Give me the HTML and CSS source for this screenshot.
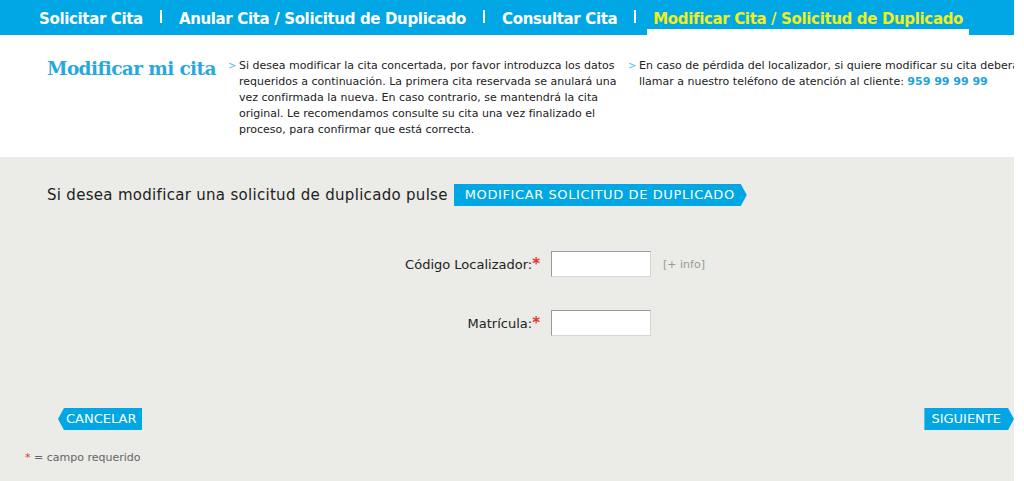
FILE: index.html
```html
<!DOCTYPE html>
<html lang="es">
<head>
<meta charset="UTF-8">
<meta name="viewport" content="width=device-width, initial-scale=1.0">
<title>Modificar Cita</title>
<link rel="stylesheet" href="styles.css">
</head>
<body>
<div class="page">
<nav class="tabs">
<a class="tab" href="#">Solicitar Cita</a>
<span class="sep"></span>
<a class="tab" href="#">Anular Cita / Solicitud de Duplicado</a>
<span class="sep"></span>
<a class="tab" href="#">Consultar Cita</a>
<span class="sep"></span>
<a class="tab active" href="#">Modificar Cita / Solicitud de Duplicado</a>
</nav>

<section class="intro">
<h1>Modificar mi cita</h1>
<p class="info info-main">Si desea modificar la cita concertada, por favor introduzca los datos requeridos a continuación. La primera cita reservada se anulará una vez confirmada la nueva. En caso contrario, se mantendrá la cita original. Le recomendamos consulte su cita una vez finalizado el proceso, para confirmar que está correcta.</p>
<p class="info info-side">En caso de pérdida del localizador, si quiere modificar su cita deberá llamar a nuestro teléfono de atención al cliente: <strong class="phone">959 99 99 99</strong></p>
</section>

<main class="form-area">
<div class="duplicate">
<span>Si desea modificar una solicitud de duplicado pulse</span>
<a class="btn btn-next" href="#">MODIFICAR SOLICITUD DE DUPLICADO</a>
</div>

<form class="fields">
<div class="field">
<label for="localizador">Código Localizador:<span class="req">*</span></label>
<input type="text" id="localizador">
<span class="more">[+ info]</span>
</div>
<div class="field">
<label for="matricula">Matrícula:<span class="req">*</span></label>
<input type="text" id="matricula">
</div>
</form>

<div class="actions">
<a class="btn btn-back" href="#">CANCELAR</a>
<a class="btn btn-next" href="#">SIGUIENTE</a>
</div>

<p class="note"><span class="req">*</span> = campo requerido</p>
</main>
</div>
</body>
</html>
```

FILE: styles.css
```css
body {
margin: 0;
padding: 0;
font-family: "DejaVu Sans", Verdana, sans-serif;
color: #222;
background-color: #fff;
}
.page {
width: 1014px;
height: 481px;
overflow: hidden;
display: flex;
flex-direction: column;
}

/* top navigation */
.tabs {
display: flex;
height: 35px;
padding-left: 39px;
background-color: #00a7e4;
flex-shrink: 0;
}
.tab {
padding: 10px 0 0;
font-size: 15px;
font-weight: bold;
letter-spacing: -0.35px;
color: #fff;
text-decoration: none;
white-space: nowrap;
}
.tab.active {
padding: 10px 6px 0;
color: #f2ee1c;
box-shadow: inset 0 -6px 0 #fff;
}
.sep {
width: 2px;
height: 13px;
margin: 10px 17px 0 17px;
background-color: #fff;
flex-shrink: 0;
}
.sep:last-of-type {
margin-right: 11px;
}

/* intro texts */
.intro {
display: flex;
height: 122px;
padding: 23px 0 0 47px;
box-sizing: border-box;
flex-shrink: 0;
}
.intro h1 {
width: 181px;
margin: 0;
font-family: "DejaVu Serif", Georgia, serif;
font-size: 18.5px;
font-weight: bold;
letter-spacing: -0.6px;
color: #29a8dc;
flex-shrink: 0;
}
.info {
position: relative;
margin: 0;
padding-left: 11px;
font-size: 11px;
line-height: 16px;
color: #222;
flex-shrink: 0;
}
.info::before {
content: ">";
position: absolute;
left: 0;
top: 0;
font-size: 10px;
color: #5bbbe6;
}
.info-main {
width: 386px;
}
.info-side {
width: 392px;
margin-left: 3px;
}
.phone {
color: #1ea3dc;
}

/* form zone */
.form-area {
flex: 1;
background-color: #ebebe7;
padding: 27px 0 0;
}
.duplicate {
display: flex;
align-items: center;
padding-left: 47px;
font-size: 15px;
letter-spacing: 0.3px;
}
.duplicate .btn {
margin-left: 6px;
letter-spacing: 0.6px;
}
.btn {
display: inline-block;
height: 22px;
line-height: 22px;
font-size: 13px;
color: #fff;
text-decoration: none;
background-color: #00a7e4;
}
.btn-next {
padding: 0 12px 0 11px;
clip-path: polygon(0 0, calc(100% - 6px) 0, 100% 50%, calc(100% - 6px) 100%, 0 100%);
}
.btn-back {
padding: 0 6px 0 8px;
clip-path: polygon(6px 0, 100% 0, 100% 100%, 6px 100%, 0 50%);
}

.fields {
margin: 45px 0 0;
}
.field {
display: flex;
align-items: center;
height: 26px;
margin-bottom: 33px;
}
.field label {
width: 540px;
text-align: right;
font-size: 13px;
}
.req {
color: #e8322c;
}
.field .req {
font-size: 15px;
font-weight: bold;
}
.field input {
width: 100px;
height: 26px;
margin: 0 0 0 11px;
padding: 0;
box-sizing: border-box;
border: 1px solid #d6d6d6;
border-top-color: #999;
border-left-color: #999;
background-color: #fff;
}
.more {
margin-left: 12px;
font-size: 11px;
color: #999;
}

.actions {
display: flex;
justify-content: space-between;
padding-left: 58px;
margin-top: 72px;
}
.actions .btn-next {
padding: 0 13px 0 7px;
}
.note {
margin: 21px 0 0 25px;
font-size: 11px;
color: #666;
}
```
